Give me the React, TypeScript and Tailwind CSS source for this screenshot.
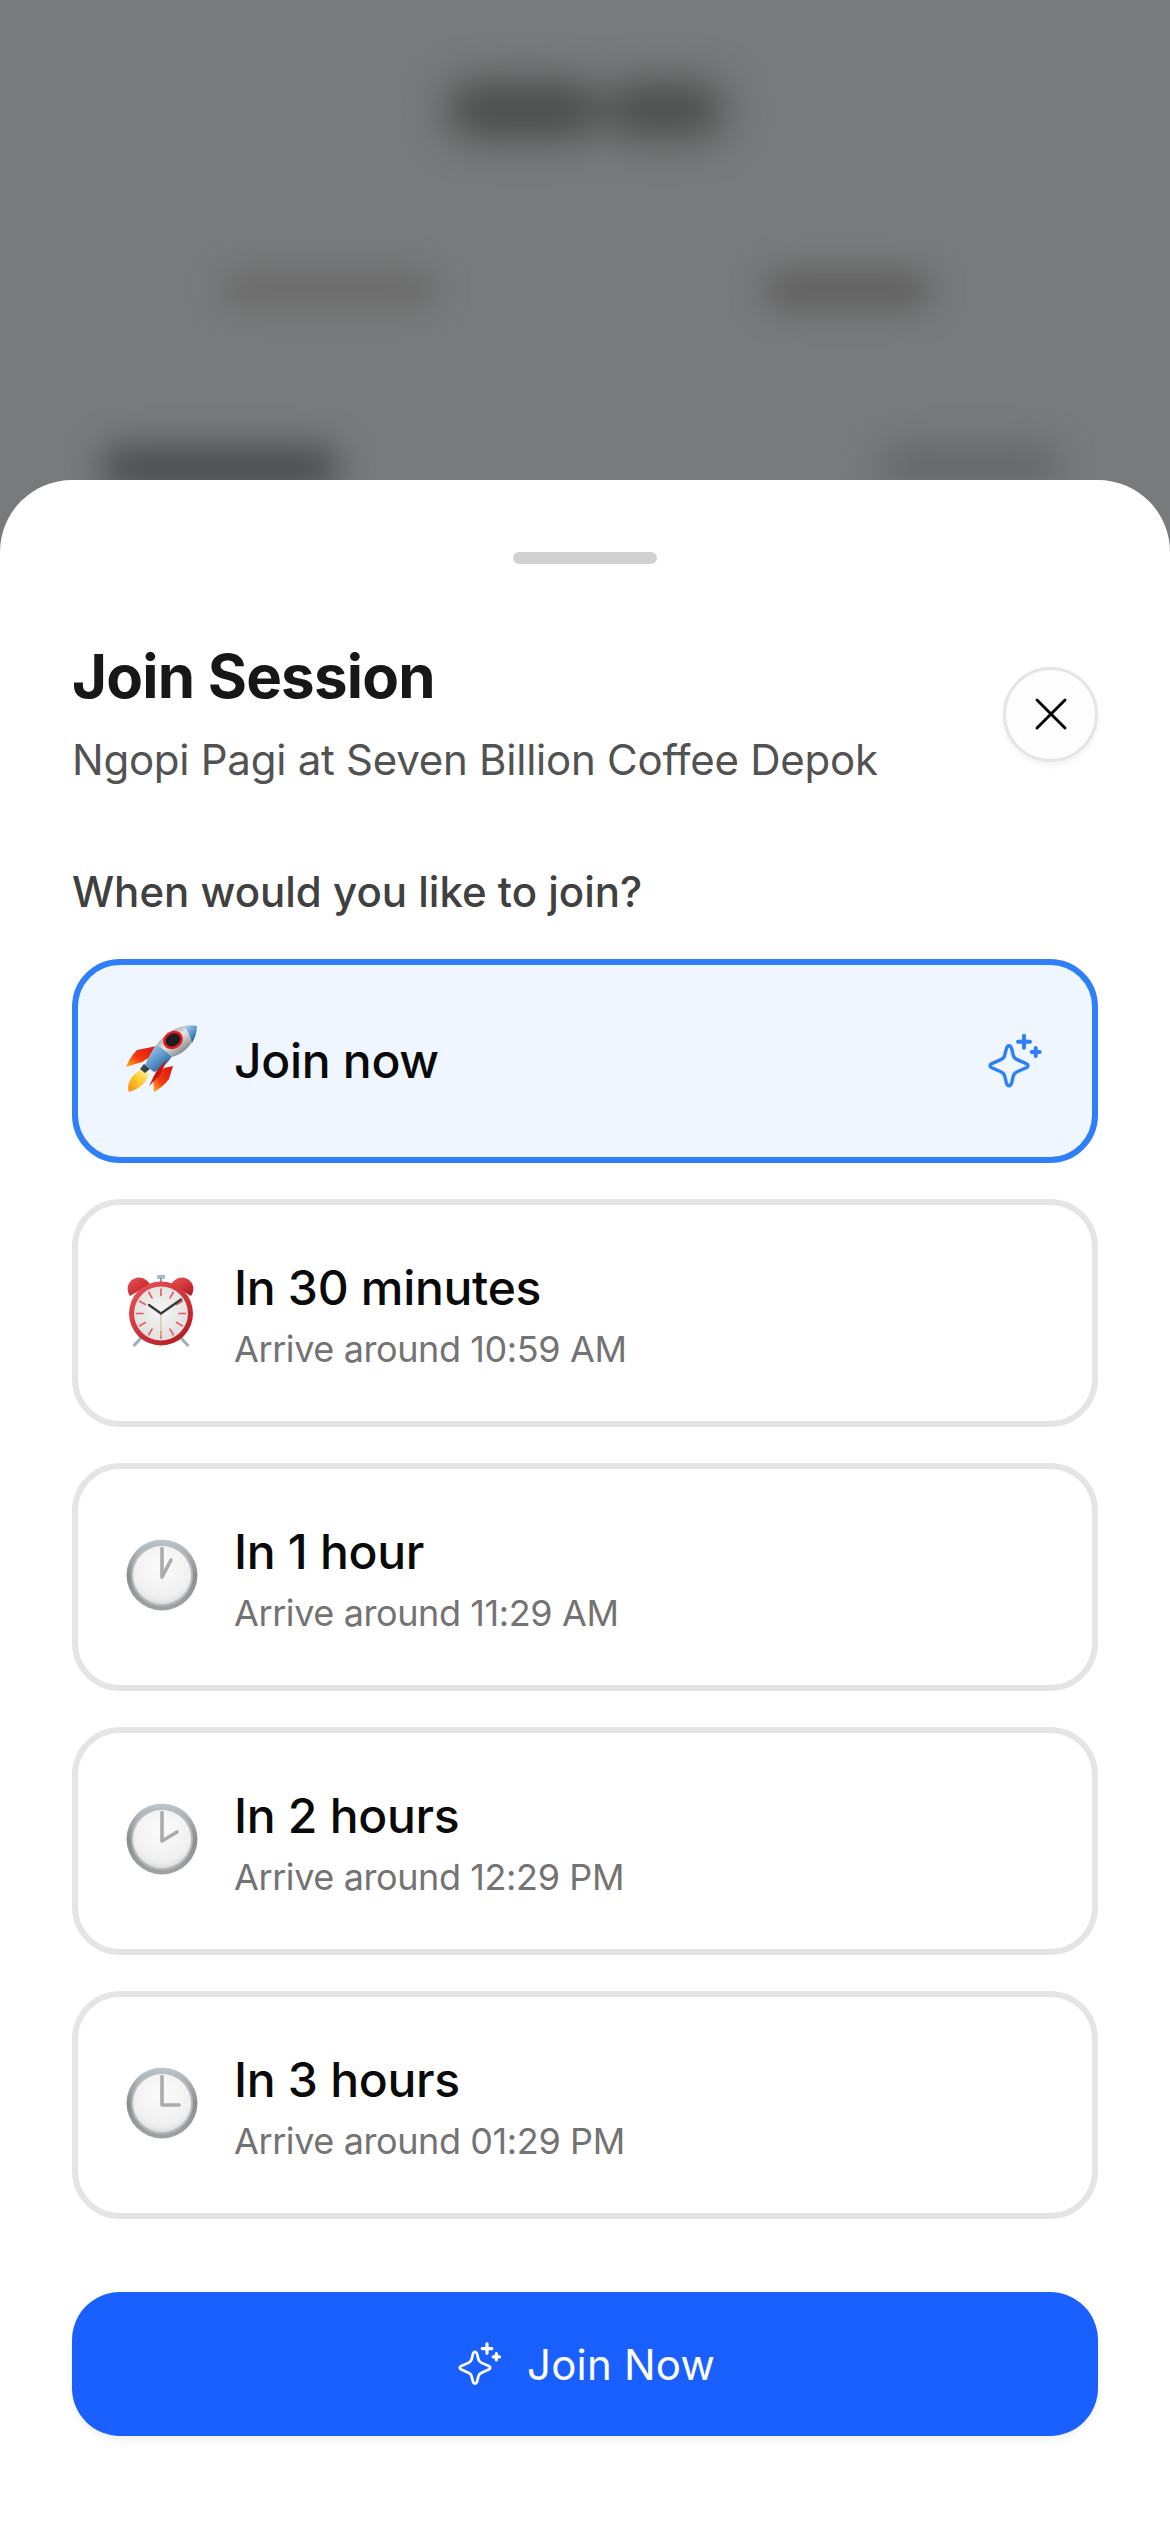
import { X } from "lucide-react";

const font = { fontFamily: "Inter, 'Noto Sans', sans-serif" };

function Sparkle({ className }: { className?: string }) {
  return (
    <svg viewBox="0 0 60 60" fill="none" stroke="currentColor" strokeWidth="3.4" strokeLinecap="round" strokeLinejoin="round" className={className}>
      <path d="M25 14.700c1.400 0 2.200 1.300 2.800 3.500l1.500 6.100c.5 2 1.900 3.400 3.900 4.300l9 4c1.200.6 1.800 1.200 1.800 2.100s-.6 1.500-1.800 2.100l-9 4c-2 .9-3.400 2.300-3.900 4.300l-1.500 6.100c-.6 2.200-1.400 3.500-2.800 3.500s-2.200-1.300-2.800-3.500l-1.500-6.100c-.5-2-1.900-3.400-3.900-4.300l-9-4c-1.200-.6-1.800-1.200-1.800-2.100s.6-1.500 1.800-2.100l9-4c2-.9 3.400-2.300 3.900-4.300l1.500-6.100c.6-2.200 1.400-3.500 2.800-3.500z" />
      <path d="M40 4.700v12M34 10.700h12M51.700 17v8M47.700 21h8" strokeWidth="4" />
    </svg>
  );
}

function Rocket() {
  return (
    <svg viewBox="0 0 72 72" className="size-[72px]">
      <defs>
        <linearGradient id="rk-body" x1="0.1" y1="0.15" x2="0.75" y2="0.9">
          <stop offset="0" stopColor="#7e8588" />
          <stop offset="0.5" stopColor="#e4e6e6" />
          <stop offset="1" stopColor="#7b8184" />
        </linearGradient>
        <linearGradient id="rk-blue" x1="0.15" y1="0.1" x2="0.8" y2="0.95">
          <stop offset="0" stopColor="#a7c8e6" />
          <stop offset="0.5" stopColor="#5c97cc" />
          <stop offset="1" stopColor="#1f558c" />
        </linearGradient>
        <linearGradient id="rk-fin" x1="1" y1="0" x2="0" y2="1">
          <stop offset="0" stopColor="#d8150c" />
          <stop offset="0.6" stopColor="#f23a10" />
          <stop offset="1" stopColor="#ffb81c" />
        </linearGradient>
        <linearGradient id="rk-fire" x1="1" y1="0" x2="0" y2="1">
          <stop offset="0" stopColor="#fff6b0" />
          <stop offset="0.55" stopColor="#ffc524" />
          <stop offset="1" stopColor="#f5861f" />
        </linearGradient>
      </defs>
      <path d="M31 23 L11 27 Q4 34 0 44 L16 39 L24 34z" fill="url(#rk-fin)" />
      <path d="M47 43 L43 56 Q37 64 28 69 L27 54 L38 45z" fill="url(#rk-fin)" />
      <path d="M16 46 L23 51 C22 58 14 66 3 69 C1 64 3 58 6 54 C9 50 13 48 16 46z" fill="url(#rk-fire)" />
      <path d="M18 41 L14 46 L19 50 L24 46z" fill="#39444a" />
      <path d="M31 21 L46 33 C42 40 36 46 28 49 L19 42 C22 35 26 27 31 21z" fill="url(#rk-blue)" />
      <path d="M31 21 C38 12 48 5 58 3 L66 19 C62 26 54 32 46 34z" fill="url(#rk-body)" />
      <path d="M58 3 C62 2 67 2 71 3 C71 9 69 15 66 20 C64 13 61 7 58 3z" fill="url(#rk-blue)" />
      <ellipse cx="47" cy="17" rx="9" ry="7.500" transform="rotate(-30 47 17)" fill="#1c1e22" stroke="#e51c1c" strokeWidth="2.600" />
      <path d="M41 36 L34 52 L23 63 L30 49z" fill="#c9140c" />
    </svg>
  );
}

const ticks = [0, 30, 60, 90, 120, 150, 180, 210, 240, 270, 300, 330];

function AlarmClock() {
  return (
    <svg viewBox="0 0 72 72" className="size-[72px]">
      <defs>
        <radialGradient id="al-face" cx="0.5" cy="0.45" r="0.6">
          <stop offset="0" stopColor="#f6f6f6" />
          <stop offset="1" stopColor="#dedede" />
        </radialGradient>
        <linearGradient id="al-red" x1="0.1" y1="0" x2="0.9" y2="1">
          <stop offset="0" stopColor="#ea5257" />
          <stop offset="1" stopColor="#b4181f" />
        </linearGradient>
      </defs>
      <path d="M15 63 L8.500 70M55 63 L61.500 70" stroke="#9fb0ba" strokeWidth="3.200" strokeLinecap="round" />
      <rect x="31" y="0" width="8" height="4" rx="1" fill="#a6bbc8" />
      <path d="M35 3v5" stroke="#8f9aa0" strokeWidth="2" />
      <path d="M4 21 C-1 14 2 4 12 2.500 C17 2 21 5 24 9z" fill="url(#al-red)" />
      <path d="M65 21 C70 14 67 4 57 2.500 C52 2 48 5 45 9z" fill="url(#al-red)" />
      <circle cx="35" cy="38.500" r="32" fill="url(#al-red)" />
      <circle cx="35" cy="38.500" r="27" fill="url(#al-face)" />
      <g stroke="#f0595a" strokeWidth="1.700" strokeLinecap="round">
        {ticks.map((deg) => (
          <path key={deg} d="M35 14v6.500" transform={`rotate(${deg} 35 38.500)`} />
        ))}
      </g>
      <path d="M35 38.500v23" stroke="#d8bd8e" strokeWidth="1.200" />
      <path d="M35 38.500 L23 30M35 38.500 L55 24.500" stroke="#3b3b3b" strokeWidth="2.400" strokeLinecap="round" />
    </svg>
  );
}

// hour hand end point is passed in, minute hand always points at 12
function Clock({ hand }: { hand: string }) {
  const id = "ck-" + hand.replace(/[^0-9]/g, "");
  return (
    <svg viewBox="0 0 72 72" className="size-[72px]">
      <defs>
        <linearGradient id={id} x1="0.5" y1="0" x2="0.5" y2="1">
          <stop offset="0" stopColor="#bcc7ce" />
          <stop offset="0.5" stopColor="#8b8e90" />
          <stop offset="1" stopColor="#a0a2a3" />
        </linearGradient>
        <radialGradient id={id + "f"} cx="0.5" cy="0.35" r="0.7">
          <stop offset="0" stopColor="#fbfbfb" />
          <stop offset="0.75" stopColor="#f0f0f0" />
          <stop offset="1" stopColor="#d6d6d6" />
        </radialGradient>
      </defs>
      <circle cx="36" cy="36" r="35.500" fill={`url(#${id})`} />
      <circle cx="36" cy="36" r="31" fill="#b8bbbd" />
      <circle cx="36" cy="36" r="29" fill={`url(#${id}f)`} />
      <path d={`M36 38V9.500M36 38${hand}`} stroke="#aaabac" strokeWidth="3.600" strokeLinecap="round" fill="none" />
    </svg>
  );
}

const slots = [
  { title: "In 30 minutes", time: "Arrive around 10:59 AM", icon: <AlarmClock /> },
  { title: "In 1 hour", time: "Arrive around 11:29 AM", icon: <Clock hand="L45 21" /> },
  { title: "In 2 hours", time: "Arrive around 12:29 PM", icon: <Clock hand="L51 29" /> },
  { title: "In 3 hours", time: "Arrive around 01:29 PM", icon: <Clock hand="L53 38" /> },
];

export default function App() {
  return (
    <div style={font} className="flex h-[2532px] w-[1170px] flex-col overflow-hidden bg-[#797a7b]">
      {/* dimmed, blurred page behind the sheet */}
      <div className="h-[480px] overflow-hidden">
        <div className="flex h-[220px] items-center justify-center">
          <div className="flex gap-[4px] blur-[20px]">
            <div className="h-[56px] w-[155px] rounded-full bg-[#4a4b4b]" />
            <div className="h-[56px] w-[120px] rounded-full bg-[#4c4d4d]" />
          </div>
        </div>
        <div className="grid grid-cols-2">
          <div className="flex justify-center pl-[72px]">
            <div className="mt-[54px] h-[30px] w-[210px] rounded-full bg-[#686868] blur-[16px]" />
          </div>
          <div className="flex justify-center pr-[60px]">
            <div className="mt-[52px] h-[36px] w-[165px] rounded-full bg-[#5e5e5e] blur-[16px]" />
          </div>
        </div>
        <div className="mt-[136px] flex justify-between pl-[100px] pr-[110px]">
          <div className="h-[48px] w-[240px] rounded-full bg-[#4f5053] blur-[16px]" />
          <div className="h-[44px] w-[180px] rounded-full bg-[#67686a] blur-[16px]" />
        </div>
      </div>

      {/* sheet */}
      <div className="relative flex-1 rounded-t-[72px] bg-white px-[72px] pt-[72px]">
        <div className="mx-auto h-[12px] w-[144px] rounded-full bg-[#d1d1d1]" />

        <div className="mt-[76px] flex items-center justify-between">
          <div>
            <h1 className="text-[60px] leading-[72px] font-bold tracking-[-0.8px] text-[#171717]">Join Session</h1>
            <p className="mt-[20px] text-[42px] leading-[56px] tracking-[-0.25px] text-[#525252]">
              Ngopi Pagi at Seven Billion Coffee Depok
            </p>
          </div>
          <button className="flex size-[95px] items-center justify-center rounded-full border-[3px] border-[#e5e5e5] bg-[#fdfdfd] shadow-[0_3px_6px_rgba(0,0,0,0.06)]">
            <X className="size-[56px] text-black" strokeWidth={1.25} />
          </button>
        </div>

        <p className="mt-[76px] text-[42px] leading-[56px] font-medium text-[#404040]">
          When would you like to join?
        </p>

        <div className="mt-[39px] flex flex-col gap-[36px]">
          <div className="flex h-[204px] items-center rounded-[48px] border-[6px] border-[#2f7ff8] bg-[#eff6ff] px-[48px]">
            <div className="mb-[4px] shrink-0">
              <Rocket />
            </div>
            <span className="ml-[36px] flex-1 text-[48px] leading-[60px] font-medium tracking-[-0.3px] text-[#0a0a0a]">Join now</span>
            <Sparkle className="size-[60px] text-[#2f7ff8]" />
          </div>
          {slots.map((slot) => (
            <div key={slot.title} className="flex h-[228px] items-center rounded-[48px] border-[6px] border-[#e5e5e5] bg-white px-[48px]">
              <div className="mb-[4px] shrink-0">{slot.icon}</div>
              <div className="ml-[36px] pt-[5px]">
                <div className="text-[48px] leading-[60px] font-medium tracking-[-0.3px] text-[#0a0a0a]">{slot.title}</div>
                <div className="mt-[7px] text-[36px] leading-[48px] tracking-[-0.4px] text-[#737373]">{slot.time}</div>
              </div>
            </div>
          ))}
        </div>

        <button className="mt-[73px] flex h-[144px] w-full items-center justify-center gap-[24px] rounded-[48px] bg-[#1a5fff] text-[42px] font-normal tracking-[0.2px] text-white shadow-[0_4px_8px_rgba(0,0,0,0.06)]">
          <Sparkle className="size-[48px] text-white" />
          Join Now
        </button>
      </div>
    </div>
  );
}
